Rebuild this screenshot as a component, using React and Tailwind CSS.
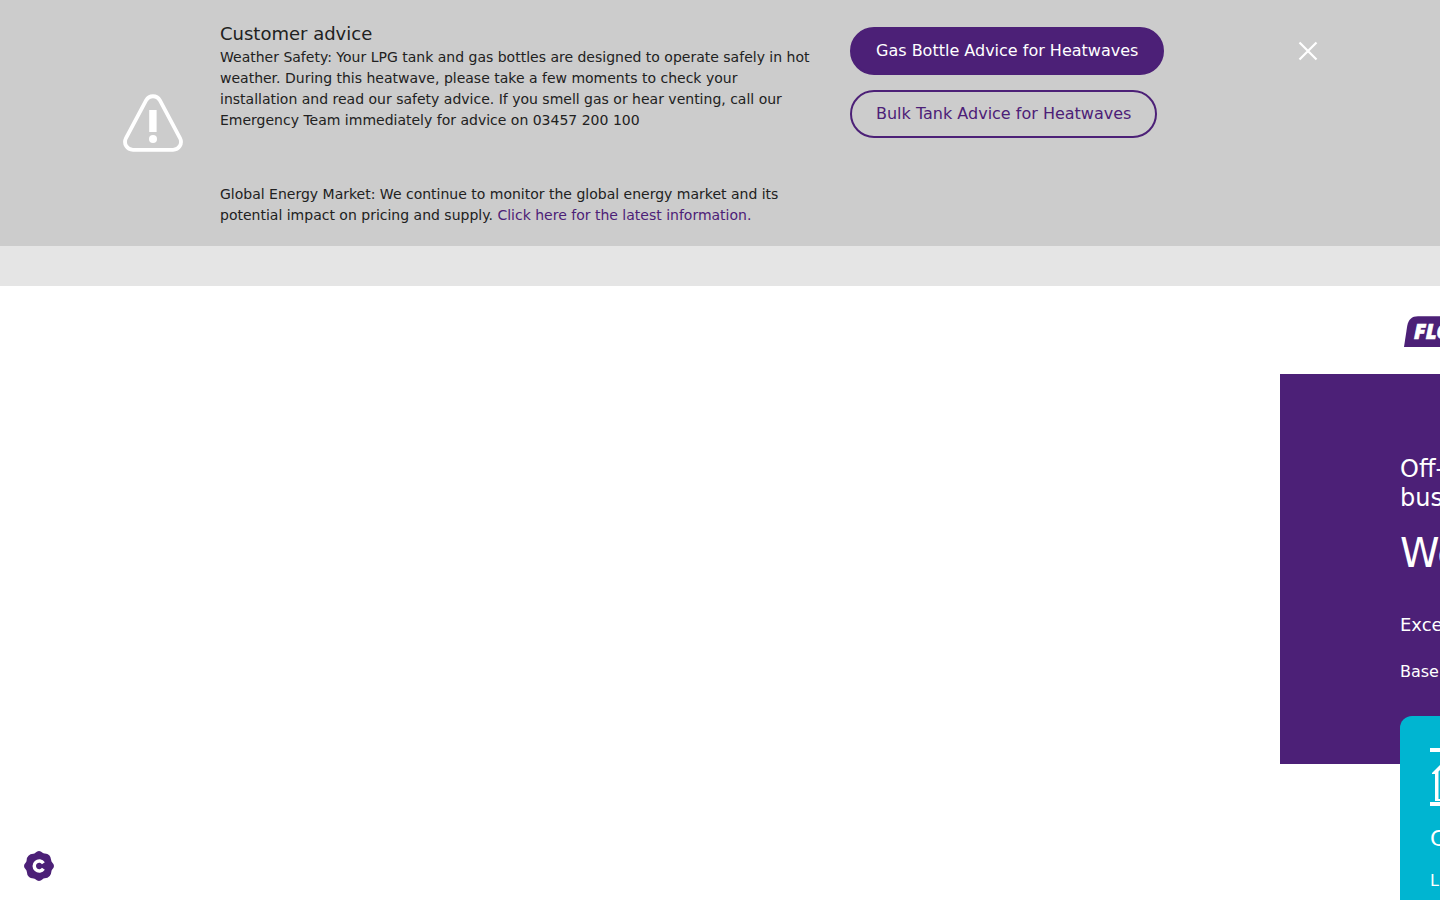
const ADVICE_LINKS = [
  { label: 'Gas Bottle Advice for Heatwaves', primary: true },
  { label: 'Bulk Tank Advice for Heatwaves', primary: false },
]

function WarningIcon() {
  return (
    <svg width="60" height="58" viewBox="0 0 60 58" fill="none" className="block">
      <path
        d="M23.2 6.2 C26.2 .9 33.8 .9 36.8 6.2 L57 44 C59.8 49.8 56 55.8 50 55.8 H10 C4 55.8 .2 49.8 3 44 Z"
        stroke="white"
        strokeWidth="3.8"
      />
      <path d="M26.2 16 H33.6 V38 H26.2 Z" fill="white" />
      <circle cx="30" cy="45" r="4" fill="white" />
    </svg>
  )
}

function CustomerAdvice() {
  return (
    <section className="flex h-[246px] bg-[#cccccc] py-5">
      <div className="flex w-[220px] shrink-0 items-center pl-[123px]">
        <WarningIcon />
      </div>
      <div className="w-[594px] shrink-0 text-sm leading-[21px]">
        <h2 className="text-lg leading-[27px]">Customer advice</h2>
        <p>
          Weather Safety: Your LPG tank and gas bottles are designed to operate safely in hot
          weather. During this heatwave, please take a few moments to check your installation
          and read our safety advice. If you smell gas or hear venting, call our Emergency Team
          immediately for advice on 03457 200 100
        </p>
        <p className="mt-[53px]">
          Global Energy Market: We continue to monitor the global energy market and its
          potential impact on pricing and supply.{' '}
          <a href="#" className="text-[#4c2077]">
            Click here for the latest information.
          </a>
        </p>
      </div>
      <div className="ml-9 flex w-[448px] shrink-0 flex-col items-start gap-[15px] pt-[7px]">
        {ADVICE_LINKS.map((link) => (
          <a
            key={link.label}
            href="#"
            className={`flex h-12 items-center whitespace-nowrap rounded-full border-2 border-[#4c2077] px-6 text-base ${
              link.primary ? 'bg-[#4c2077] text-white' : 'text-[#4c2077]'
            }`}
          >
            {link.label}
          </a>
        ))}
      </div>
      <button type="button" aria-label="Close" className="mt-[21px] size-5 shrink-0">
        <svg width="20" height="20" viewBox="0 0 20 20" className="block">
          <path d="M1.5 1.5 L18.5 18.5 M18.5 1.5 L1.5 18.5" stroke="white" strokeWidth="2.2" />
        </svg>
      </button>
    </section>
  )
}

function Logo() {
  return (
    <svg width="36" height="31" viewBox="0 0 36 31" className="block">
      <path d="M0 31 L3.2 10 C4.3 3.5 8 .3 14 .3 H36 V31 Z" fill="#4c2077" />
      <text
        x="10"
        y="22.6"
        fill="white"
        stroke="white"
        strokeWidth="0.7"
        fontFamily="'Open Sans', sans-serif"
        fontSize="20.5"
        fontWeight="800"
        fontStyle="italic"
      >
        FLO
      </text>
    </svg>
  )
}

function ServiceCard() {
  return (
    <div className="-mt-12 ml-[120px] h-[184px] overflow-hidden rounded-tl-[12px] bg-[#00b5d1] pl-[30px] pt-8 text-white">
      <svg width="10" height="58" viewBox="0 0 10 58" fill="none" className="block">
        <path d="M0 2 H10 M0 56 H10" stroke="white" strokeWidth="4" />
        <path d="M2 25 L10 17 V22 L8.5 23.5 V51 H10 V53 H5 V26 H2 Z" fill="white" />
      </svg>
      <p className="mt-[18px] text-[22px] leading-[30px]">C</p>
      <p className="mt-[15px] text-base leading-6">L</p>
    </div>
  )
}

function Slide() {
  return (
    <main className="ml-auto w-40 overflow-hidden">
      <header className="flex h-[88px] pl-[124px] pt-[30px]">
        <Logo />
      </header>
      <div className="h-[390px] whitespace-nowrap bg-[#4c2077] pl-[120px] pt-[81px] text-white">
        <p className="text-2xl leading-[29px]">
          Off-
          <br />
          bus
        </p>
        <h1 className="mt-4 text-[40px] leading-[48px]">We</h1>
        <p className="mt-[34px] text-lg leading-[27px]">Exce</p>
        <p className="mt-[22px] text-base leading-6">Base</p>
      </div>
      <ServiceCard />
    </main>
  )
}

function CookieButton() {
  return (
    <button type="button" aria-label="Cookie settings" className="absolute left-6 top-[851px]">
      <svg width="30" height="30" viewBox="0 0 30 30" className="block">
        <path
          d="M11.4 1.8 Q15 -1.8 18.6 1.8 Q19.4 2.6 20.5 2.6 Q26.5 2.4 27.2 9.3 Q27.3 10.6 28.2 11.4 Q31.8 15 28.2 18.6 Q27.4 19.4 27.4 20.5 Q27 26.8 20.7 27.2 Q19.4 27.3 18.6 28.2 Q15 31.8 11.4 28.2 Q10.6 27.4 9.5 27.4 Q3.2 27 2.8 20.7 Q2.7 19.4 1.8 18.6 Q-1.8 15 1.8 11.4 Q2.6 10.6 2.6 9.5 Q3 3.2 9.3 2.8 Q10.6 2.7 11.4 1.8 Z"
          fill="#4c2077"
        />
        <path d="M19.4 12.2 A5 5 0 1 0 19.4 17.8" stroke="white" strokeWidth="3.5" fill="none" />
      </svg>
    </button>
  )
}

export default function App() {
  return (
    <div className="relative h-[900px] w-[1440px] overflow-hidden bg-white font-['DejaVu_Sans',sans-serif] text-[#212121]">
      <CustomerAdvice />
      <div className="h-10 bg-[#e5e5e5]" />
      <Slide />
      <CookieButton />
    </div>
  )
}
